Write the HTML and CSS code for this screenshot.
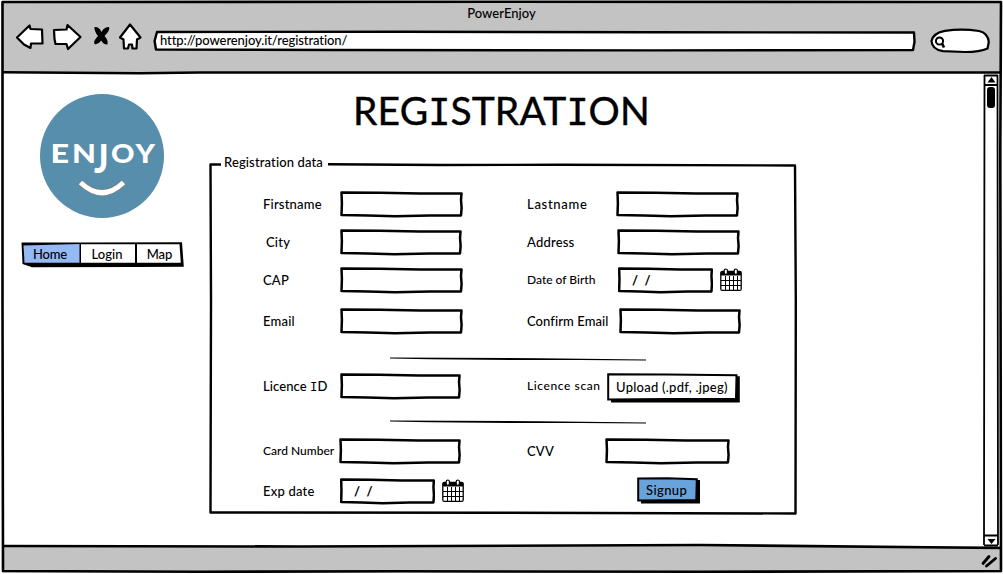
FILE: index.html
```html
<!DOCTYPE html>
<html lang="en">
<head>
<meta charset="utf-8">
<title>PowerEnjoy</title>
<link rel="stylesheet" href="styles.css">
</head>
<body>
<svg class="defs" width="0" height="0" aria-hidden="true">
  <symbol id="box" viewBox="0 0 123 27" preserveAspectRatio="none">
    <path d="M1.500 1.500 L40 1.800 L80 2.400 L121.500 2.600 L121 9 L121.600 17 L121 24.400 L90 24.600 L55 25.300 L28 24.600 L1.500 24 L1.900 12 Z" fill="#fff" stroke="#000" stroke-width="2.500" stroke-linejoin="round" vector-effect="non-scaling-stroke"/>
  </symbol>
  <symbol id="calendar" viewBox="0 0 22 24">
    <rect x="0.8" y="3.500" width="20.400" height="18.900" rx="1.500" fill="#fff" stroke="#000" stroke-width="1.300"/>
    <path d="M.8 3.500H21.200V7.500H.8Z"/>
    <path d="M5.500 8V22M9.500 8V22M13.500 8V22M17.500 8V22M1 12.500H21M1 17.500H21" stroke="#000" stroke-width="1"/>
    <rect x="4.200" y="1" width="3.200" height="5.400" rx="1.600" fill="#fff" stroke="#000" stroke-width="1.200"/>
    <rect x="14.200" y="1" width="3.200" height="5.400" rx="1.600" fill="#fff" stroke="#000" stroke-width="1.200"/>
  </symbol>
  <symbol id="rule" viewBox="0 0 256 5">
    <path d="M0 .6 L60 .8 L150 1.200 L256 2.400 V3.400 L190 3 L120 3 L40 2.200 L0 1.400 Z"/>
  </symbol>
</svg>
<div class="window">
  <header class="chrome">
    <div class="title">PowerEnjoy</div>
    <div class="toolbar">
      <svg class="nav-icons" width="130" height="32" viewBox="14 22 130 32">
        <g fill="#fff" stroke="#000" stroke-width="2.200" stroke-linejoin="round">
          <path d="M17 37.500 L29.500 25.500 L30.500 29 L42 29.500 L42.500 43.500 L31 43.500 L30.500 48 L24 44.500 Z"/>
          <path d="M54 30 L66.500 29.500 L67.500 25 L80.500 37 L68 49 L66.500 44 L55.500 44 L54.500 39 Z"/>
          <path d="M130 24.500 L140.500 37.500 L137 39.500 L136.500 48.500 L132.500 48.500 L132 44.500 L129 44.500 L128 48.500 L124 48.500 L123.500 39.500 L120 37.500 Z"/>
        </g>
        <path d="M94.500 27 Q99 26.500 101.500 32 Q104 27 109 27 Q110.500 30 104.500 36 Q108.500 40 107.500 44.500 Q103.500 45 101.300 40.500 Q98 45 94.500 44 Q93 41 98 36 Q94 31 94.500 27Z"/>
      </svg>
      <div class="address">
        <svg width="764" height="22" viewBox="0 0 764 22"><path d="M4 2 L250 1.800 L500 2.300 L761 2.500 L761.500 12 L760 20 L500 20.400 L180 20 L3 19.500 L1.600 11 Z" fill="#fff" stroke="#000" stroke-width="2.400" stroke-linejoin="round"/></svg>
        <span>http://powerenjoy.it/registration/</span>
      </div>
      <svg class="search" width="62" height="27" viewBox="929 27 62 27">
        <path d="M931.500 41 Q933 33 945 30.800 Q962 28.500 979 31 Q988 33 988.800 42 L987.500 48.500 Q980 52 965 52 L943 51.200 Q932 49.500 931.500 41Z" fill="#fff" stroke="#000" stroke-width="2.200"/>
        <circle cx="939.500" cy="41" r="3.600" fill="#fff" stroke="#000" stroke-width="2"/><path d="M942 43.500 L944 47.500" stroke="#000" stroke-width="2.600"/>
      </svg>
    </div>
  </header>
  <main class="page">
    <aside class="side">
      <svg class="logo" width="124" height="124" viewBox="40 94 124 124">
        <circle cx="102" cy="156" r="62" fill="#568eac"/>
        <g class="logo-text">
          <text x="50.500" y="163" textLength="18.500" lengthAdjust="spacingAndGlyphs">E</text>
          <text x="72" y="163" textLength="24" lengthAdjust="spacingAndGlyphs">N</text>
          <text transform="translate(94 172.500) scale(1 1.500)" textLength="14.500" lengthAdjust="spacingAndGlyphs">J</text>
          <text x="111" y="163" textLength="23.500" lengthAdjust="spacingAndGlyphs">O</text>
          <text x="135.500" y="163" textLength="19.500" lengthAdjust="spacingAndGlyphs">Y</text>
        </g>
        <path d="M80.500 182.500 Q102 203 123.500 182.500" fill="none" stroke="#a56f48" stroke-width="5.800"/>
        <path d="M80.500 182.500 Q102 203 123.500 182.500" fill="none" stroke="#fff" stroke-width="5"/>
      </svg>
      <nav class="menu">
        <svg width="164" height="27" viewBox="20 241 164 27">
          <path d="M21.500 242.500 L80 242.500 L182 242.300 L183.800 266.800 L136 267 L32 267.200 L22.500 264Z"/>
          <path d="M23.500 245.500 L79.500 244 V262.700 H24.500Z" fill="#94b9f3"/>
          <path d="M81 244.200 H135 V262.700 H81Z M137 244.200 H179.500 L180.800 262.700 H137Z" fill="#fff"/>
        </svg>
        <a class="home">Home</a><a class="login">Login</a><a class="map">Map</a>
      </nav>
    </aside>
    <section class="content">
      <h1>REG<i>I</i>STRAT<i>I</i>ON</h1>
      <form class="panel">
        <svg class="outline" width="588" height="353" viewBox="209 163 588 353">
          <path d="M221 164.500 L210.500 164.500 L211 300 L210.500 512.500 L500 512.800 L795.500 513.500 L795.800 300 L795 165.500 L560 164.800 L440 165 L328 164.300" fill="none" stroke="#000" stroke-width="2.400" stroke-linejoin="round"/>
        </svg>
        <div class="legend">Registration data</div>
        <div class="row">
          <label class="first">Firstname</label><div class="field"><svg><use href="#box"/></svg></div>
          <label class="last">Lastname</label><div class="field r1"><svg><use href="#box"/></svg></div>
        </div>
        <div class="row">
          <label class="city">City</label><div class="field narrow"><svg><use href="#box"/></svg></div>
          <label class="addr">Address</label><div class="field r2"><svg><use href="#box"/></svg></div>
        </div>
        <div class="row">
          <label class="cap">CAP</label><div class="field"><svg><use href="#box"/></svg></div>
          <label class="birth">Date of Birth</label><div class="field date r3"><svg><use href="#box"/></svg><span>/&nbsp; /</span></div>
          <svg class="cal"><use href="#calendar"/></svg>
        </div>
        <div class="row tall">
          <label class="email">Email</label><div class="field"><svg><use href="#box"/></svg></div>
          <label class="confirm">Confirm Email</label><div class="field r4"><svg><use href="#box"/></svg></div>
        </div>
        <svg class="rule one"><use href="#rule"/></svg>
        <div class="row short">
          <label class="licence">Licence <i>I</i>D</label><div class="field narrow2"><svg><use href="#box"/></svg></div>
          <label class="scan">Licence scan</label>
          <div class="button upload"><svg width="134" height="31" viewBox="0 0 134 31"><path d="M4 5 L132.800 3.300 V29.500 H4Z"/><path d="M1.200 1.200 L60 1.400 L129.500 2.200 L129 25.800 L60 26 L1.200 26.500Z" fill="#fff" stroke="#000" stroke-width="2"/></svg><span>Upload (.pdf, .jpeg)</span></div>
        </div>
        <svg class="rule two"><use href="#rule"/></svg>
        <div class="row short">
          <label class="card">Card Number</label><div class="field card-field"><svg><use href="#box"/></svg></div>
          <label class="cvv">CVV</label><div class="field r5"><svg><use href="#box"/></svg></div>
        </div>
        <div class="row end">
          <label class="exp">Exp date</label><div class="field date"><svg><use href="#box"/></svg><span>/&nbsp; /</span></div>
          <svg class="cal"><use href="#calendar"/></svg>
          <div class="button signup"><svg width="64" height="28" viewBox="0 0 64 28"><path d="M4 5 L63 3 V26.500 H4Z"/><path d="M1.200 1.500 L30 1.300 L59.800 2.200 L59.300 23 L1.200 23.500Z" fill="#68a3dc" stroke="#000" stroke-width="2"/></svg><span>Signup</span></div>
        </div>
      </form>
    </section>
  </main>
  <footer class="status"></footer>
  <svg class="frame" width="1003" height="574" viewBox="0 0 1003 574">
    <path d="M0 0 H1003 V574 H0Z M2 2 V572.500 H1001.500 V2Z" fill="#fff" fill-rule="evenodd"/>
    <g fill="none" stroke="#000" stroke-width="2.600" stroke-linejoin="round">
      <path d="M2.500 2 L500 1.700 L1001 2 L1000.300 150 L1001 571 L700 571.800 L400 571.300 L200 571.800 L3 571 L2.500 300Z"/>
      <path d="M2 72.200 L140 73.200 L200 72.500 L1000 72.500 M2 546 L300 546.500 L700 545 L1000 548"/>
      <path stroke-width="1.800" d="M984.500 75 L984 545 M997.500 75 L998 545 M984 75.500 H998 M984 85 H998 M984 535.500 H998 M984 545.500 H998"/>
    </g>
    <path d="M991.500 77 L995.500 82.500 H987.500Z M987.500 539 H995.500 L991.500 544Z"/>
    <rect x="987" y="87" width="8" height="21" rx="3"/>
    <path d="M983 563.500 L989 556.500 M986.500 566 L995.500 558.500" stroke="#000" stroke-width="2.900" stroke-linecap="round"/>
  </svg>
</div>
</body>
</html>
```
FILE: styles.css
```css
* { box-sizing: border-box; }
body { margin: 0; background: #fff; color: #000; font: 500 13px/16px Lato, "Liberation Sans", sans-serif; }
.window { position: relative; display: flex; flex-direction: column; width: 1003px; height: 574px; overflow: hidden; }
.frame { position: absolute; left: 0; top: 0; pointer-events: none; }
.defs { position: absolute; }
svg { display: block; flex: none; }
i { font-family: "DejaVu Sans Mono", monospace; font-style: normal; font-size: .94em; letter-spacing: 0; }

.chrome { height: 73px; padding: 5px 0 0 0; background: #c3c3c3; }
.title { height: 17px; text-align: center; letter-spacing: .05px; }
.toolbar { display: flex; align-items: flex-start; padding-left: 14px; }
.nav-icons > path { fill: #000; }
.address { display: grid; align-items: center; width: 764px; height: 22px; margin: 8px 0 0 9px; }
.address > * { grid-area: 1 / 1; }
.address span { padding: 0 0 2px 7px; letter-spacing: -.09px; }
.search { margin: 5px 0 0 12px; }

.page { display: flex; height: 473px; }
.side { width: 209px; padding: 21px 0 0 20px; }
.logo { margin-left: 20px; }
.logo-text { font: 900 27px Lato, sans-serif; fill: #fff; }
.menu { display: grid; grid-template-columns: 60px 56px 48px; width: 164px; height: 27px; margin-top: 23px; text-align: center; }
.menu svg { grid-area: 1 / 1 / 2 / 4; }
.menu a { grid-row: 1; padding-top: 5px; letter-spacing: 0; }
.home { grid-column: 1; }
.login { grid-column: 2; padding-right: 2px; }
.map { grid-column: 3; padding-right: 1px; }
.menu .home { letter-spacing: -.15px; }

.content { width: 588px; }
h1 { height: 90px; margin: 0; padding: 14px 0 0 144px; font-size: 39px; line-height: 46px; font-weight: 400; letter-spacing: .15px; white-space: nowrap; -webkit-text-stroke: .4px #000; }
.panel { display: grid; grid-template-rows: 22px 38px 38px 38px 44px 29px 28px 38px 26px 52px; width: 588px; height: 353px; }
.outline { grid-column: 1; grid-row: 1 / 11; }
.legend { grid-area: 1 / 1; margin-top: -9px; padding-left: 15px; letter-spacing: .13px; }
.row { grid-column: 1; display: flex; align-items: center; padding-left: 54px; }
.row:nth-of-type(2) { grid-row: 2; }
.row:nth-of-type(3) { grid-row: 3; }
.row:nth-of-type(4) { grid-row: 4; }
.row:nth-of-type(5) { grid-row: 5; }
.row:nth-of-type(6) { grid-row: 7; }
.row:nth-of-type(7) { grid-row: 9; }
.row:nth-of-type(8) { grid-row: 10; }
.end { padding-top: 2px; }
.rule { grid-column: 1; width: 256px; height: 5px; margin-left: 181px; }
.rule.one { grid-row: 6; margin-top: 14px; }
.rule.two { grid-row: 8; margin-top: 20px; }
label { width: 77px; white-space: nowrap; letter-spacing: .2px; }
.city { padding-left: 3px; }
.field { display: grid; align-items: center; flex: none; width: 123px; height: 27px; }
.field > * { grid-area: 1 / 1; }
.field svg { width: 100%; height: 27px; }
.field span { padding-left: 14px; font-weight: 700; }
.field + label { width: 90px; margin-left: 64px; }
.narrow { width: 122px; }
.narrow + label { margin-left: 65px; }
.narrow2 { width: 121px; }
.narrow2 + label { width: 80px; margin-left: 66px; }
.card-field { width: 122px; margin-left: -1px; }
.card-field + label { width: 78px; margin-left: 66px; }
.r1 { margin-left: -1px; }
.r3 { margin-left: 1px; }
.r4 { width: 122px; margin-left: 2px; }
.r5 { width: 125px; }
.date { width: 95px; }
.cal { width: 22px; height: 24px; margin-left: 7px; }
.button { display: grid; align-items: center; flex: none; }
.button > * { grid-area: 1 / 1; }
.upload { height: 31px; align-self: flex-start; margin-top: 1px; }
.upload span { padding: 0 0 3px 9px; letter-spacing: .25px; }
.signup { margin-left: 173px; }
.signup span { padding: 0 0 2px 9px; letter-spacing: .4px; }
.last { letter-spacing: .7px; }
.birth, .scan, .card { font-size: 12px; }
.birth, .card { letter-spacing: 0; }
.confirm, .licence { letter-spacing: .08px; }
.scan { letter-spacing: .6px; }

.status { height: 28px; background: #c3c3c3; }
```
